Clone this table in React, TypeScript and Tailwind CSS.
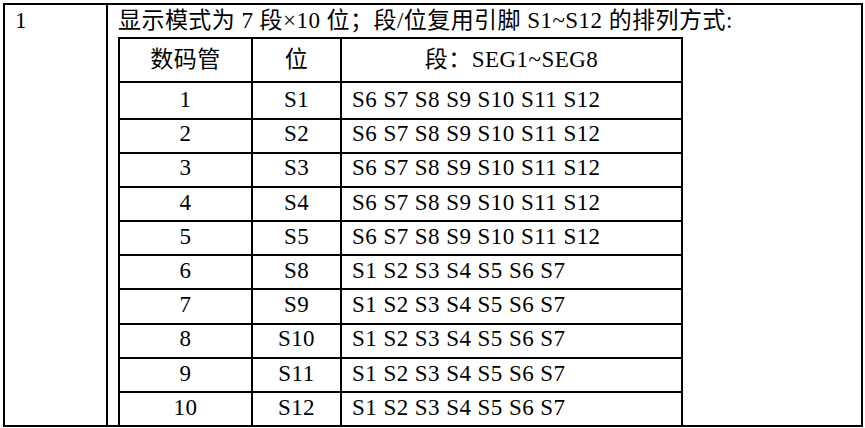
import React from "react";

type Row = { tube: string; pos: string; segs: string };

const rows: Row[] = [
  { tube: "1", pos: "S1", segs: "S6 S7 S8 S9 S10 S11 S12" },
  { tube: "2", pos: "S2", segs: "S6 S7 S8 S9 S10 S11 S12" },
  { tube: "3", pos: "S3", segs: "S6 S7 S8 S9 S10 S11 S12" },
  { tube: "4", pos: "S4", segs: "S6 S7 S8 S9 S10 S11 S12" },
  { tube: "5", pos: "S5", segs: "S6 S7 S8 S9 S10 S11 S12" },
  { tube: "6", pos: "S8", segs: "S1 S2 S3 S4 S5 S6 S7" },
  { tube: "7", pos: "S9", segs: "S1 S2 S3 S4 S5 S6 S7" },
  { tube: "8", pos: "S10", segs: "S1 S2 S3 S4 S5 S6 S7" },
  { tube: "9", pos: "S11", segs: "S1 S2 S3 S4 S5 S6 S7" },
  { tube: "10", pos: "S12", segs: "S1 S2 S3 S4 S5 S6 S7" },
];

const SegmentTable: React.FC = () => {
  return (
    <div className="w-[565px] border-l-2 border-t-2 border-black">
      <div className="grid h-[44px] grid-cols-[133px_89px_341px]">
        <div className="flex items-center justify-center border-r-2 border-b-2 border-black">数码管</div>
        <div className="flex items-center justify-center border-r-2 border-b-2 border-black">位</div>
        <div className="flex items-center justify-center border-r-2 border-b-2 border-black">段：SEG1~SEG8</div>
      </div>
      {rows.map((r) => (
        <div key={r.tube} className="grid h-[34.2px] grid-cols-[133px_89px_341px]">
          <div className="flex items-center justify-center border-r-2 border-b-2 border-black">{r.tube}</div>
          <div className="flex items-center justify-center border-r-2 border-b-2 border-black">{r.pos}</div>
          <div className="flex items-center border-r-2 border-b-2 border-black pl-[10px] whitespace-nowrap">
            {r.segs}
          </div>
        </div>
      ))}
    </div>
  );
};

const App: React.FC = () => {
  return (
    <div className="min-h-screen bg-white pl-[3px] pt-[3px]">
      <div className="flex h-[424px] w-[860px] border-2 border-black font-['Liberation_Serif','Noto_Sans_CJK_SC',serif] text-[23px] tracking-[0.45px] text-black">
        <div className="w-[103px] shrink-0 border-r-2 border-black pl-[10px] leading-[32px]">1</div>
        <div className="flex-1 pl-[10px]">
          <div className="h-[32px] whitespace-nowrap leading-[32px]">
            显示模式为 7 段×10 位；段/位复用引脚 S1~S12 的排列方式:
          </div>
          <SegmentTable />
        </div>
      </div>
    </div>
  );
};

export default App;
